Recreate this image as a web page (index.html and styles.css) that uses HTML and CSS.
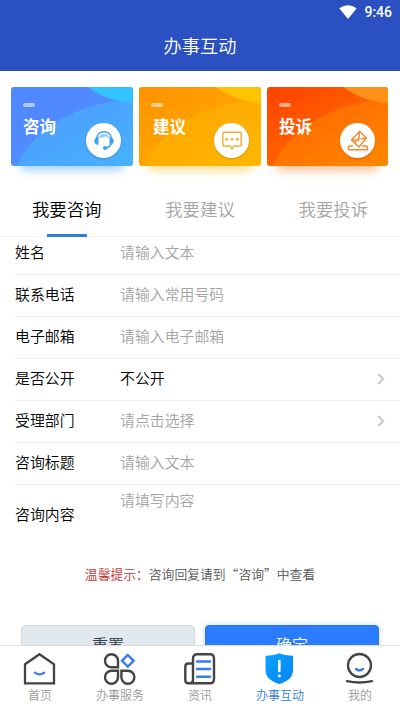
FILE: index.html
```html
<!DOCTYPE html>
<html lang="zh-CN">
<head>
<meta charset="utf-8">
<title>办事互动</title>
<link rel="stylesheet" href="styles.css">
</head>
<body>
<div class="app">
  <header class="header">
    <div class="status">
      <svg class="wifi" width="18" height="15" viewBox="0 0 18 15"><path d="M.3 3.3Q9-2.700 17.700 3.300L9 14Z" fill="#fff"/></svg>
      <span class="clock">9:46</span>
    </div>
    <h1 class="title">办事互动</h1>
  </header>
  <main class="main">
    <section class="cards">
      <div class="card card-blue">
        <svg class="art" viewBox="0 0 122 79" preserveAspectRatio="none"><path class="hill" d="M6 79C22 42 62 17 122 12V79Z"/><path class="sun" d="M77 0Q95 14 122 16V0Z"/></svg>
        <i class="dash"></i><b class="card-name">咨询</b>
        <span class="badge"><svg width="22" height="22" viewBox="0 0 22 22" fill="none"><path d="M3.500 8.500C4.500-.6 17.500-.6 18.500 8.500M18.500 13Q17.500 17.200 12.500 18" stroke="#3fa4ee" stroke-width="1.500"/><path d="M5.500 6.500Q1.300 7.500 1.300 11T5.500 15ZM16.500 6.500Q20.700 7.500 20.700 11T16.500 15Z" fill="#3fa4ee"/><path d="M5.500 8Q6.500 4 11 4T16.500 8Q14 7.500 13 6.300Q10 8 5.500 8Z" fill="#8fd0fa"/><circle cx="12" cy="18" r="2" fill="#3fa4ee"/></svg></span>
      </div>
      <div class="card card-yellow">
        <svg class="art" viewBox="0 0 122 79" preserveAspectRatio="none"><path class="hill" d="M6 79C22 42 62 17 122 12V79Z"/><path class="sun" d="M77 0Q95 14 122 16V0Z"/></svg>
        <i class="dash"></i><b class="card-name">建议</b>
        <span class="badge"><svg width="22" height="22" viewBox="0 0 22 22" fill="none"><path d="M3.300 2.300H18.700Q20.200 2.300 20.200 3.800V14.500Q20.200 16 18.700 16H13L11 18.800L9 16H3.300Q1.800 16 1.800 14.500V3.800Q1.800 2.300 3.300 2.300Z" stroke="#f2ad2b" stroke-width="1.400"/><g fill="#f2a51c"><circle cx="5.700" cy="9.300" r="1.300"/><circle cx="11" cy="9.300" r="1.300"/><circle cx="16.300" cy="9.300" r="1.300"/></g></svg></span>
      </div>
      <div class="card card-red">
        <svg class="art" viewBox="0 0 122 79" preserveAspectRatio="none"><path class="hill" d="M6 79C22 42 62 17 122 12V79Z"/><path class="sun" d="M77 0Q95 14 122 16V0Z"/></svg>
        <i class="dash"></i><b class="card-name">投诉</b>
        <span class="badge"><svg width="22" height="22" viewBox="0 0 22 22" fill="none" stroke="#f58a2c" stroke-width="1.500" stroke-linejoin="round"><path d="M4.500 9.800L12.600 1.500L19.500 8L11.800 17Z"/><path d="M4.500 9.800L11.500 10.300L12.600 1.500M13.500 9L19.500 8M9 10.500L8.700 13"/><path d="M6 16H3Q1.500 16 1.500 17.200V19.700H20.500V17.200Q20.500 16 19 16H15"/></svg></span>
      </div>
    </section>
    <nav class="tabs">
      <a class="tab active">我要咨询</a>
      <a class="tab">我要建议</a>
      <a class="tab">我要投诉</a>
    </nav>
    <section class="form">
      <div class="row"><label>姓名</label><span class="hint">请输入文本</span></div>
      <div class="row"><label>联系电话</label><span class="hint">请输入常用号码</span></div>
      <div class="row"><label>电子邮箱</label><span class="hint">请输入电子邮箱</span></div>
      <div class="row"><label>是否公开</label><span class="value">不公开</span><svg class="chevron" width="8" height="12" viewBox="0 0 8 12"><path d="M1.200 1L6.200 6L1.200 11"/></svg></div>
      <div class="row"><label>受理部门</label><span class="hint">请点击选择</span><svg class="chevron" width="8" height="12" viewBox="0 0 8 12"><path d="M1.200 1L6.200 6L1.200 11"/></svg></div>
      <div class="row"><label>咨询标题</label><span class="hint">请输入文本</span></div>
      <div class="row row-area"><label>咨询内容</label><span class="hint">请填写内容</span></div>
    </section>
    <p class="tip"><span class="tip-head">温馨提示：</span>咨询回复请到“咨询”中查看</p>
    <div class="buttons">
      <button class="btn reset">重置</button>
      <button class="btn submit">确定</button>
    </div>
  </main>
  <footer class="bottom">
    <a class="item"><svg width="34" height="34" viewBox="0 0 34 34" fill="none"><path d="M2 12.300L16.500 2.200L31 12.300V31.300H2Z" stroke="#444" stroke-width="2.300"/><path d="M11.800 20.700Q16.500 24.200 21.200 20.700" stroke="#347cf0" stroke-width="2.200" stroke-linecap="round"/></svg><span>首页</span></a>
    <a class="item"><svg width="34" height="34" viewBox="0 0 34 34" fill="none" stroke="#444" stroke-width="2.400"><path d="M15 15.200H8.500A6.500 6.500 0 1 1 15 8.700Z"/><path d="M15 18.800H8.500A6.500 6.500 0 1 0 15 25.300Z"/><path d="M18.400 18.800H24.900A6.500 6.500 0 1 1 18.400 25.300Z"/><path d="M24.800 3L30.600 8.800L24.800 14.600L19 8.800Z" stroke="#347cf0"/></svg><span>办事服务</span></a>
    <a class="item"><svg width="34" height="34" viewBox="0 0 34 34" fill="none" stroke="#444" stroke-width="2.400"><path d="M10 11.500H5.500Q2.300 11.500 2.300 14.700V28Q2.300 31.300 5.500 31.300H27Q31 31.300 31 27V6.500Q31 2.300 27 2.300H14.300Q10 2.300 10 6.500V28Q10 31.300 6.500 31.300"/><path d="M14 9.500H27M14 17H27M14 24.800H27" stroke="#347cf0" stroke-linecap="round"/></svg><span>资讯</span></a>
    <a class="item active"><svg width="34" height="34" viewBox="0 0 34 34"><defs><linearGradient id="shield" x2="1" y2="1"><stop stop-color="#08a4ff"/><stop offset="1" stop-color="#0783f5"/></linearGradient></defs><path d="M16.300 1.200Q21.800 3.600 30.100 3.800V18C30.100 26 23.300 30 16.300 32C9.300 30 2.500 26 2.500 18V3.800Q10.800 3.600 16.300 1.200Z" fill="url(#shield)"/><path d="M16.300 9V19" stroke="#fff" stroke-width="2.600" stroke-linecap="round"/><circle cx="16.300" cy="24" r="1.500" fill="#fff"/></svg><span>办事互动</span></a>
    <a class="item"><svg width="34" height="34" viewBox="0 0 34 34" fill="none" stroke="#444" stroke-width="2.300" stroke-linecap="round"><circle cx="16.500" cy="13.500" r="11.500"/><path d="M4 29.200Q16.500 31.800 29 29.200"/><path d="M13 17Q16.500 19.900 20 17" stroke="#347cf0"/></svg><span>我的</span></a>
  </footer>
</div>
</body>
</html>
```
FILE: styles.css
```css
* { box-sizing: border-box; }
body {
  margin: 0;
  font-family: "Noto Sans CJK SC", sans-serif;
  font-weight: 350;
  color: #000;
  background: #fff;
}
.app {
  width: 400px;
  height: 710px;
  display: flex;
  flex-direction: column;
  overflow: hidden;
}
.header {
  flex: none;
  height: 71px;
  background: #2b50c2;
  color: #fff;
}
.status {
  height: 24px;
  display: flex;
  justify-content: flex-end;
  align-items: center;
  gap: 7px;
  padding-right: 8px;
}
.clock { font: 500 14px/24px Roboto, sans-serif; }
.title {
  margin: 0;
  font-size: 18.2px;
  line-height: 43px;
  font-weight: 350;
  text-align: center;
}
.main { flex: 1; min-height: 0; overflow: hidden; }
.cards {
  display: grid;
  grid-template-columns: 122px 122px 121px;
  gap: 6px;
  padding: 16px 0 0 11px;
}
.card {
  position: relative;
  height: 79px;
  border-radius: 3px;
  padding: 16px 12px;
}
.art {
  position: absolute;
  inset: 0;
  width: 100%;
  height: 100%;
  border-radius: 3px;
}
.card-blue { background: linear-gradient(150deg, #5088ff 35%, #4aa8ff); box-shadow: 0 14px 9px -10px #9dceff; }
.card-blue .hill { fill: #46c0ff; opacity: .42; }
.card-blue .sun { fill: #33c4ff; }
.card-yellow { background: linear-gradient(150deg, #ff9100, #ffb400); box-shadow: 0 14px 9px -10px #ffda80; }
.card-yellow .hill { fill: #ffc000; opacity: .32; }
.card-yellow .sun { fill: #ffc400; }
.card-red { background: linear-gradient(150deg, #ff4600 10%, #ff8000); box-shadow: 0 14px 9px -10px #ffbb88; }
.card-red .hill { fill: #ff9400; opacity: .38; }
.card-red .sun { fill: #ff9018; }
.dash {
  position: relative;
  display: block;
  width: 12px;
  height: 4px;
  border-radius: 2px;
  background: rgba(255, 255, 255, .55);
}
.card-name {
  position: relative;
  display: block;
  margin-top: 7px;
  font-size: 16.5px;
  line-height: 24px;
  font-weight: 700;
  color: #fff;
}
.card-yellow .card-name { padding-left: 2px; }
.badge {
  position: absolute;
  left: 75px;
  top: 36px;
  width: 35px;
  height: 35px;
  border-radius: 50%;
  background: #fff;
  box-shadow: 0 1px 2px rgba(0, 0, 0, .2);
  display: flex;
  align-items: center;
  justify-content: center;
}
.card-red .badge { left: 73px; }
.tabs {
  display: flex;
  height: 55px;
  margin-top: 16px;
  border-bottom: 1px solid #f0f0f0;
}
.tab {
  position: relative;
  flex: 1;
  text-align: center;
  font-size: 17.4px;
  line-height: 53px;
  color: #a5a5a5;
}
.tab.active { color: #000; }
.tab.active::after {
  content: "";
  position: absolute;
  left: 47px;
  bottom: -1px;
  width: 40px;
  height: 3px;
  background: #347ce0;
}
.form { margin: -4px 0 0 15px; font-size: 14.9px; }
.row {
  display: flex;
  align-items: center;
  height: 42px;
  padding-bottom: 3px;
  border-bottom: 1px solid #eee;
  line-height: 22px;
}
.row label { width: 105px; }
.hint { color: #a5a5a5; }
.chevron {
  position: relative;
  top: 1px;
  margin-left: auto;
  margin-right: 15px;
  fill: none;
  stroke: #c8c8cc;
  stroke-width: 1.9;
}
.row-area { height: 60px; padding-bottom: 2px; border-bottom: 0; }
.row-area .hint { align-self: flex-start; margin-top: 4px; }
.tip {
  margin: 18px 0 0;
  text-align: center;
  font-size: 12.8px;
  line-height: 22px;
  color: #555;
}
.tip-head { color: #c9302c; }
.buttons {
  display: grid;
  grid-template-columns: 174px 174px;
  gap: 10px;
  justify-content: center;
  margin-top: 40px;
}
.btn {
  height: 38px;
  border: 1px solid #d3d9de;
  border-radius: 4px;
  padding: 0;
  font: 350 16px/36px "Noto Sans CJK SC", sans-serif;
}
.reset { background: #e1e8ee; color: #333b4a; }
.submit {
  background: #2a7dff;
  border-color: #2f73dc;
  color: #fff;
  box-shadow: 0 0 5px rgba(42, 125, 255, .3);
}
.bottom {
  position: relative;
  flex: none;
  height: 65px;
  display: flex;
  border-top: 1px solid #dedede;
  background: #fff;
}
.item {
  flex: 1;
  display: flex;
  flex-direction: column;
  align-items: center;
  padding-top: 6px;
  font-size: 12px;
  line-height: 18px;
  color: #999;
}
.item.active { color: #347cd8; }
```
